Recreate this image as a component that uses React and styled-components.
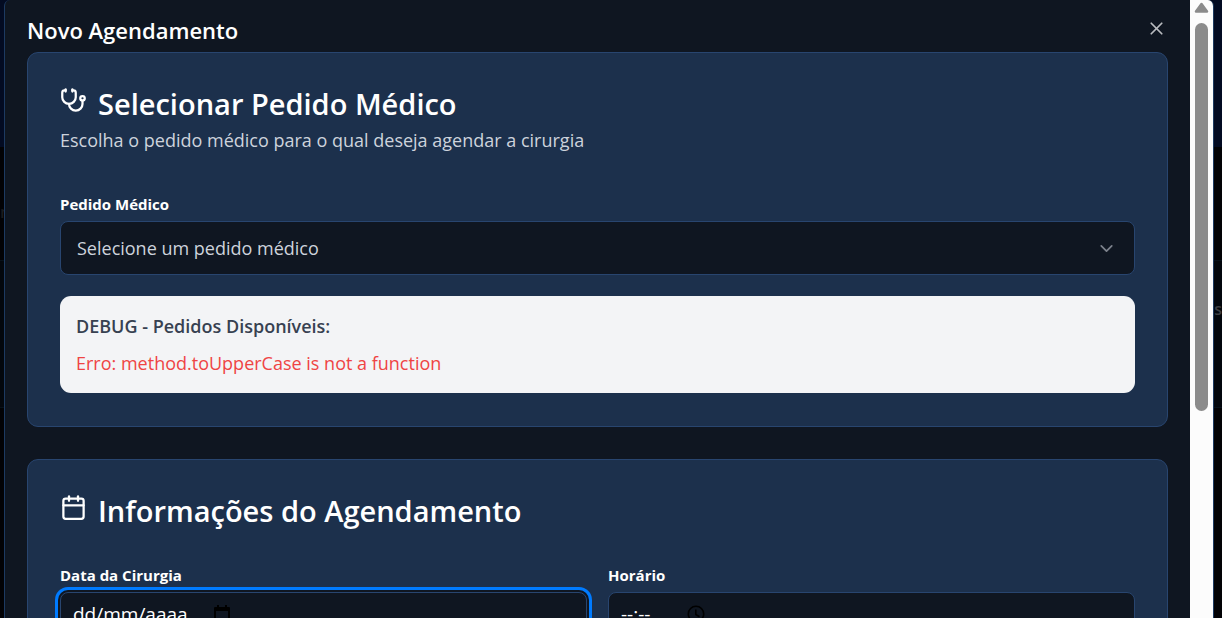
import React from "react";
import styled, { createGlobalStyle, css } from "styled-components";
import { Stethoscope, Calendar, ChevronDown, X } from "lucide-react";

const GlobalStyle = createGlobalStyle`
  *, *::before, *::after { box-sizing: border-box; }
  html, body { margin: 0; height: 100%; overflow: hidden; background: #000; }
  body, input, select, button { font-family: "Open Sans", "Noto Sans", sans-serif; }
  h1, h2, h3, p { margin: 0; }
`;

const Page = styled.div`
  position: relative;
  height: 100vh;
  overflow: hidden;
  background: #020205;
`;

const PageBanner = styled.div`
  height: 147px;
  background: #030b22;
`;

const PageRow = styled.div`
  display: flex;
  align-items: center;
  justify-content: ${(p) => (p.$end ? "flex-end" : "flex-start")};
  height: ${(p) => p.$height}px;
  padding-top: ${(p) => (p.$end ? 0 : 16)}px;
  padding-bottom: ${(p) => (p.$end ? 50 : 0)}px;
  border-bottom: 1px solid #07111a;
  background: ${(p) => p.$tone};
  color: ${(p) => (p.$end ? "#3c3e42" : "#1a1b1e")};
  font-size: 16px;
  font-weight: 600;
`;

const Dialog = styled.section`
  position: absolute;
  inset: 0 8px 0 4px;
  display: flex;
  overflow: hidden;
  border: solid #1d3a61;
  border-width: 0 1px;
  border-radius: 6px 6px 0 0;
  background: #0f1621;
  color: #fff;
`;

const DialogBody = styled.div`
  flex: 1;
  min-width: 0;
  height: 100vh;
  overflow: hidden;
  padding: 15px 22px 0;
`;

const DialogHeader = styled.header`
  display: flex;
  justify-content: space-between;
  height: 37px;
`;

const DialogTitle = styled.h1`
  font-size: 22px;
  line-height: 30px;
  font-weight: 600;
`;

const CloseButton = styled.button`
  display: grid;
  place-items: center;
  width: 23px;
  height: 27px;
  padding: 0;
  border: 0;
  background: none;
  color: #b9bcc0;
`;

const Scrollbar = styled.div`
  display: flex;
  flex-direction: column;
  align-items: center;
  gap: 10px;
  width: 23px;
  padding-top: 2px;
  background: #fcfcfc;
  color: #8b8b8b;
`;

const ScrollThumb = styled.div`
  width: 13px;
  height: 63%;
  border-radius: 7px;
  background: #8b8b8b;
`;

const Card = styled.section`
  margin-bottom: 32px;
  padding: 32px 32px 33px;
  border: 1px solid #28456f;
  border-radius: 11px;
  background: #1c304c;
`;

const CardHeading = styled.div`
  display: flex;
  align-items: center;
  gap: 11px;
  height: 37px;

  > svg { margin-bottom: 6px; }
`;

const CardTitle = styled.h2`
  font-size: 29px;
  line-height: 36px;
  font-weight: 600;
`;

const CardDescription = styled.p`
  margin-top: 4px;
  font-size: 18px;
  line-height: 28px;
  color: #cdd3dc;
`;

const CardContent = styled.div`
  display: grid;
  grid-template-columns: ${(p) => (p.$columns ? "1fr 1fr" : "1fr")};
  gap: 21px;
  margin-top: ${(p) => p.$space}px;
`;

const Field = styled.div`
  display: flex;
  flex-direction: column;
  gap: 5px;
`;

const Label = styled.label`
  font-size: 15px;
  line-height: 24px;
  font-weight: 700;
`;

const controlFrame = css`
  height: 54px;
  border: 1px solid #28456f;
  border-radius: 8px;
  background: #0f1621;
`;

const SelectFrame = styled.div`
  display: grid;
  align-items: center;

  > * { grid-area: 1 / 1; }
  > svg { justify-self: end; margin-right: 18px; color: #7c828c; pointer-events: none; }
`;

const Select = styled.select`
  ${controlFrame}
  width: 100%;
  padding: 0 16px;
  appearance: none;
  color: #cdd3dc;
  font-size: 18px;
`;

const InputFrame = styled.div`
  ${controlFrame}
  display: flex;
  align-items: center;
  padding: 0 12px 10px;
  box-shadow: ${(p) => (p.$focused ? "0 0 0 2px #0f1621, 0 0 0 5px #007bff" : "none")};
  color: #000;
`;

const Input = styled.input`
  width: ${(p) => p.$width}px;
  padding: 0;
  border: 0;
  outline: 0;
  background: none;
  color: #fff;
  font-size: 19px;

  &::placeholder { color: #fff; opacity: 1; }
`;

const DebugPanel = styled.div`
  padding: 16px;
  border-radius: 11px;
  background: #f3f4f6;
  line-height: 28px;
  font-size: 18px;
`;

const DebugTitle = styled.h3`
  margin-bottom: 9px;
  color: #374151;
  font-size: 18px;
  font-weight: 600;
`;

const DebugError = styled.p`
  color: #ef4444;
`;

const DateGlyph = () => (
  <svg width="16" height="18" viewBox="0 0 16 18" aria-hidden="true">
    <path d="M3 0h2v2h6V0h2v2h2q1 0 1 1v14q0 1-1 1H1q-1 0-1-1V3q0-1 1-1h2zM2 6v10h12V6z" fill="currentColor" fillRule="evenodd" />
  </svg>
);

const TimeGlyph = () => (
  <svg width="18" height="18" viewBox="0 0 18 18" fill="none" stroke="currentColor" strokeWidth="1.6" aria-hidden="true">
    <circle cx="9" cy="9" r="7.7" />
    <path d="M8.8 4.500v5l3.700 2.200" />
  </svg>
);

export default function App() {
  return (
    <>
      <GlobalStyle />
      <Page>
        <PageBanner />
        <PageRow $height={114} $tone="#020205">
          <span>n</span>
        </PageRow>
        <PageRow $height={147} $tone="#03070d" $end>
          <span>os</span>
        </PageRow>
        <Dialog role="dialog" aria-labelledby="dialog-title">
          <DialogBody>
            <DialogHeader>
              <DialogTitle id="dialog-title">Novo Agendamento</DialogTitle>
              <CloseButton type="button" aria-label="Fechar">
                <X size={21} strokeWidth={2} />
              </CloseButton>
            </DialogHeader>

            <Card>
              <CardHeading>
                <Stethoscope size={27} />
                <CardTitle>Selecionar Pedido Médico</CardTitle>
              </CardHeading>
              <CardDescription>Escolha o pedido médico para o qual deseja agendar a cirurgia</CardDescription>
              <CardContent $space={38}>
                <Field>
                  <Label htmlFor="pedido">Pedido Médico</Label>
                  <SelectFrame>
                    <Select id="pedido" defaultValue="">
                      <option value="">Selecione um pedido médico</option>
                    </Select>
                    <ChevronDown size={21} />
                  </SelectFrame>
                </Field>
                <DebugPanel>
                  <DebugTitle>DEBUG - Pedidos Disponíveis:</DebugTitle>
                  <DebugError>Erro: method.toUpperCase is not a function</DebugError>
                </DebugPanel>
              </CardContent>
            </Card>

            <Card>
              <CardHeading>
                <Calendar size={27} />
                <CardTitle>Informações do Agendamento</CardTitle>
              </CardHeading>
              <CardContent $columns $space={34}>
                <Field>
                  <Label htmlFor="data">Data da Cirurgia</Label>
                  <InputFrame $focused>
                    <Input id="data" type="text" placeholder="dd/mm/aaaa" $width={141} />
                    <DateGlyph />
                  </InputFrame>
                </Field>
                <Field>
                  <Label htmlFor="horario">Horário</Label>
                  <InputFrame>
                    <Input id="horario" type="text" placeholder="--:--" $width={66} />
                    <TimeGlyph />
                  </InputFrame>
                </Field>
              </CardContent>
            </Card>
          </DialogBody>
          <Scrollbar aria-hidden="true">
            <svg width="15" height="11" viewBox="0 0 15 11">
              <path d="M7.500 2L13 9.500H2z" fill="currentColor" stroke="currentColor" strokeWidth="2.500" strokeLinejoin="round" />
            </svg>
            <ScrollThumb />
          </Scrollbar>
        </Dialog>
      </Page>
    </>
  );
}
